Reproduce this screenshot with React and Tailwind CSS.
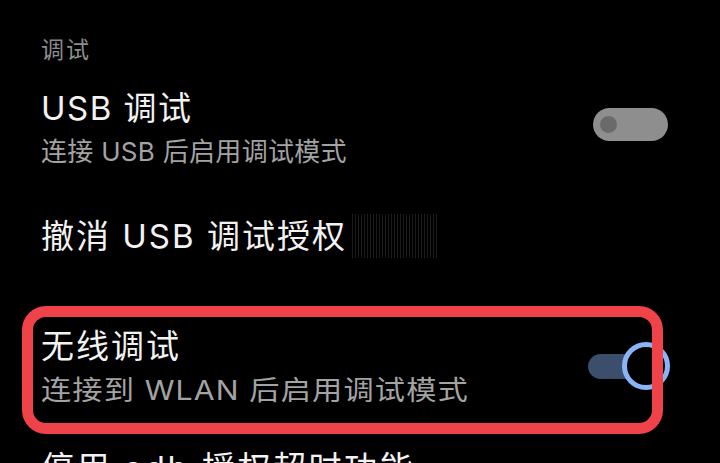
import React from 'react';

function Toggle({ on }) {
  if (on) {
    return (
      <div className="relative w-[82px] h-[48px] flex items-center">
        <div className="w-[70px] h-[25px] rounded-full bg-[#3b4e6c]" />
        <div className="absolute right-0 top-0 w-[48px] h-[48px] rounded-full border-[5px] border-[#8ab4f8] bg-black" />
      </div>
    );
  }
  return (
    <div className="w-[75px] h-[33px] rounded-full bg-[#8e8e8e] flex items-center pl-[7px]">
      <div className="w-[17px] h-[17px] rounded-full bg-[#6a6a6a]" />
    </div>
  );
}

export default function App() {
  return (
    <div className="w-[720px] h-[463px] bg-black overflow-hidden pl-[41px] pr-[52px] font-['Inter','Noto_Sans_CJK_SC',sans-serif] whitespace-nowrap">
      {/* 分组标题 */}
      <div className="pt-[35px] text-[23px] leading-[30px] tracking-[2px] text-[#8d8d8d]">调试</div>

      {/* USB 调试 */}
      <div className="mt-[23px] flex justify-between">
        <div>
          <div className="text-[33px] leading-[40px] tracking-[1.5px] text-[#f2f2f2]">USB 调试</div>
          <div className="mt-[7px] text-[26px] leading-[34px] tracking-[0.3px] text-[#a3a3a3]">连接 USB 后启用调试模式</div>
        </div>
        <div className="mt-[20px]">
          <Toggle on={false} />
        </div>
      </div>

      {/* 撤消授权 */}
      <div className="mt-[45px] flex items-center">
        <span className="text-[33px] leading-[40px] tracking-[2px] text-[#f2f2f2]">撤消 USB 调试授权</span>
        <span className="ml-[5px] w-[85px] h-[44px] bg-[repeating-linear-gradient(90deg,#1c1c1c_0px,#1c1c1c_1px,transparent_1px,transparent_3px)]" />
      </div>

      {/* 无线调试 (带红框标注) */}
      <div className="relative mt-[68px] flex justify-between">
        <div>
          <div className="text-[33px] leading-[40px] tracking-[2px] text-[#f2f2f2]">无线调试</div>
          <div className="mt-[8px] inline-block origin-left scale-x-[1.12] text-[27px] leading-[34px] tracking-[1px] text-[#a3a3a3]">连接到 WLAN 后启用调试模式</div>
        </div>
        <div className="mt-[16px] -mr-[2px]">
          <Toggle on />
        </div>
        <div className="absolute -top-[20px] -left-[19px] w-[641px] h-[128px] rounded-[24px] border-[11px] border-[#ef4349] pointer-events-none" />
      </div>

      {/* 下一项，被截断 */}
      <div className="mt-[40px] text-[33px] leading-[40px] tracking-[2.5px] text-[#f2f2f2]">停用 adb 授权超时功能</div>
    </div>
  );
}
